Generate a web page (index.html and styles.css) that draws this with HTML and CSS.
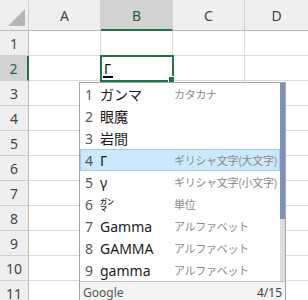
FILE: index.html
```html
<!DOCTYPE html>
<html lang="ja">
<head>
<meta charset="utf-8">
<link rel="stylesheet" href="styles.css">
</head>
<body>
<div class="sheet">
  <div class="row head">
    <div class="cell corner"><svg width="17" height="17" viewBox="0 0 17 17"><polygon points="17,0 17,17 0,17" fill="#b5b5b5"/></svg></div>
    <div class="cell hc">A</div>
    <div class="cell hc sel">B</div>
    <div class="cell hc">C</div>
    <div class="cell hc last">D</div>
  </div>
  <div class="row"><div class="cell rh">1</div><div class="cell"></div><div class="cell"></div><div class="cell"></div><div class="cell last"></div></div>
  <div class="row"><div class="cell rh rsel">2</div><div class="cell"></div><div class="cell active"><span class="comp">Γ</span><span class="handle"></span></div><div class="cell"></div><div class="cell last"></div></div>
  <div class="row"><div class="cell rh">3</div><div class="cell"></div><div class="cell"></div><div class="cell"></div><div class="cell last"></div></div>
  <div class="row"><div class="cell rh">4</div><div class="cell"></div><div class="cell"></div><div class="cell"></div><div class="cell last"></div></div>
  <div class="row"><div class="cell rh">5</div><div class="cell"></div><div class="cell"></div><div class="cell"></div><div class="cell last"></div></div>
  <div class="row"><div class="cell rh">6</div><div class="cell"></div><div class="cell"></div><div class="cell"></div><div class="cell last"></div></div>
  <div class="row"><div class="cell rh">7</div><div class="cell"></div><div class="cell"></div><div class="cell"></div><div class="cell last"></div></div>
  <div class="row"><div class="cell rh">8</div><div class="cell"></div><div class="cell"></div><div class="cell"></div><div class="cell last"></div></div>
  <div class="row"><div class="cell rh">9</div><div class="cell"></div><div class="cell"></div><div class="cell"></div><div class="cell last"></div></div>
  <div class="row"><div class="cell rh">10</div><div class="cell"></div><div class="cell"></div><div class="cell"></div><div class="cell last"></div></div>
  <div class="row"><div class="cell rh">11</div><div class="cell"></div><div class="cell"></div><div class="cell"></div><div class="cell last"></div></div>
</div>

<div class="ime">
  <div class="list">
    <div class="items">
      <div class="item"><span class="num">1</span><span class="txt">ガンマ</span><span class="ann">カタカナ</span></div>
      <div class="item"><span class="num">2</span><span class="txt">眼魔</span><span class="ann"></span></div>
      <div class="item"><span class="num">3</span><span class="txt">岩間</span><span class="ann"></span></div>
      <div class="item on"><span class="num">4</span><span class="txt">Γ</span><span class="ann">ギリシャ文字(大文字)</span></div>
      <div class="item"><span class="num">5</span><span class="txt">γ</span><span class="ann">ギリシャ文字(小文字)</span></div>
      <div class="item"><span class="num">6</span><span class="txt">㌏</span><span class="ann">単位</span></div>
      <div class="item"><span class="num">7</span><span class="txt">Gamma</span><span class="ann">アルファベット</span></div>
      <div class="item"><span class="num">8</span><span class="txt">GAMMA</span><span class="ann">アルファベット</span></div>
      <div class="item"><span class="num">9</span><span class="txt">gamma</span><span class="ann">アルファベット</span></div>
    </div>
    <div class="scroll"><div class="thumb"></div></div>
  </div>
  <div class="foot"><span class="g">Google</span><span class="pg">4/15</span></div>
</div>
</body>
</html>
```

FILE: styles.css
```css
html, body {
  margin: 0;
  padding: 0;
  background: #fff;
  overflow: hidden;
}
body {
  width: 308px;
  height: 300px;
  position: relative;
  font-family: "Noto Sans", "Noto Sans CJK JP", sans-serif;
}
.sheet {
  display: flex;
  flex-direction: column;
}
.row {
  display: grid;
  grid-template-columns: 29px 72px 72px 72px 63px;
  height: 25px;
}
.row.head {
  height: 31px;
}
.cell {
  box-sizing: border-box;
  border-right: 1px solid #dadada;
  border-bottom: 1px solid #dadada;
}
.cell.last {
  border-right: none;
}
.head .cell {
  background: #efefef;
  border-right-color: #cfcfcf;
  border-bottom-color: #b9b9b9;
}
.corner {
  display: flex;
  justify-content: flex-end;
  align-items: flex-end;
  padding: 0 3px 4px 0;
}
.hc {
  display: flex;
  align-items: center;
  justify-content: center;
  font-size: 14px;
  color: #444;
  padding-top: 1px;
}
.hc.sel {
  background: #d2d2d2 !important;
  color: #1f5f3e;
  border-bottom: 2px solid #217346 !important;
}
.rh {
  background: #efefef;
  border-right-color: #b9b9b9;
  border-bottom-color: #cfcfcf;
  display: flex;
  align-items: center;
  justify-content: center;
  font-size: 14px;
  color: #444;
}
.rh.rsel {
  background: #d2d2d2;
  color: #1f5f3e;
  border-right: 2px solid #217346;
}
.active {
  position: relative;
  outline: 2px solid #217346;
  outline-offset: -1px;
  display: flex;
  align-items: center;
  padding-left: 2px;
  font-size: 14px;
}
.comp {
  display: inline-block;
  line-height: 15px;
  padding: 0 2px 0 1px;
  border-bottom: 2px solid #000;
  color: #111;
  margin-top: 2px;
}
.handle {
  position: absolute;
  right: -3px;
  bottom: -3px;
  width: 5px;
  height: 5px;
  background: #217346;
  border: 1px solid #fff;
}
.ime {
  position: absolute;
  left: 79px;
  top: 82px;
  width: 207px;
  box-sizing: border-box;
  border: 1px solid #a6a6a6;
  background: #fff;
  display: flex;
  flex-direction: column;
}
.list {
  display: flex;
}
.items {
  flex: 1;
  display: flex;
  flex-direction: column;
}
.item {
  height: 22px;
  display: flex;
  align-items: center;
  white-space: nowrap;
}
.item.on {
  background: #cce8fb;
  box-shadow: inset 0 0 0 1px #9ccbee;
}
.num {
  width: 18px;
  padding-right: 2px;
  text-align: center;
  font-size: 14px;
  color: #555;
}
.txt {
  width: 74px;
  font-size: 14px;
  color: #1a1a1a;
}
.ann {
  font-family: "Noto Sans CJK JP", sans-serif;
  font-size: 11px;
  color: #8a8a8a;
  letter-spacing: -0.3px;
}
.scroll {
  width: 5px;
  background: #dcdcdc;
  display: flex;
  flex-direction: column;
}
.thumb {
  height: 136px;
  background: #7e91b3;
}
.foot {
  height: 20px;
  border-top: 1px solid #bdbdbd;
  background: #f4f4f4;
  display: flex;
  justify-content: space-between;
  align-items: center;
  padding: 0 3px 0 3px;
  font-size: 12px;
  color: #555;
}
.pg {
  color: #444;
}
```
